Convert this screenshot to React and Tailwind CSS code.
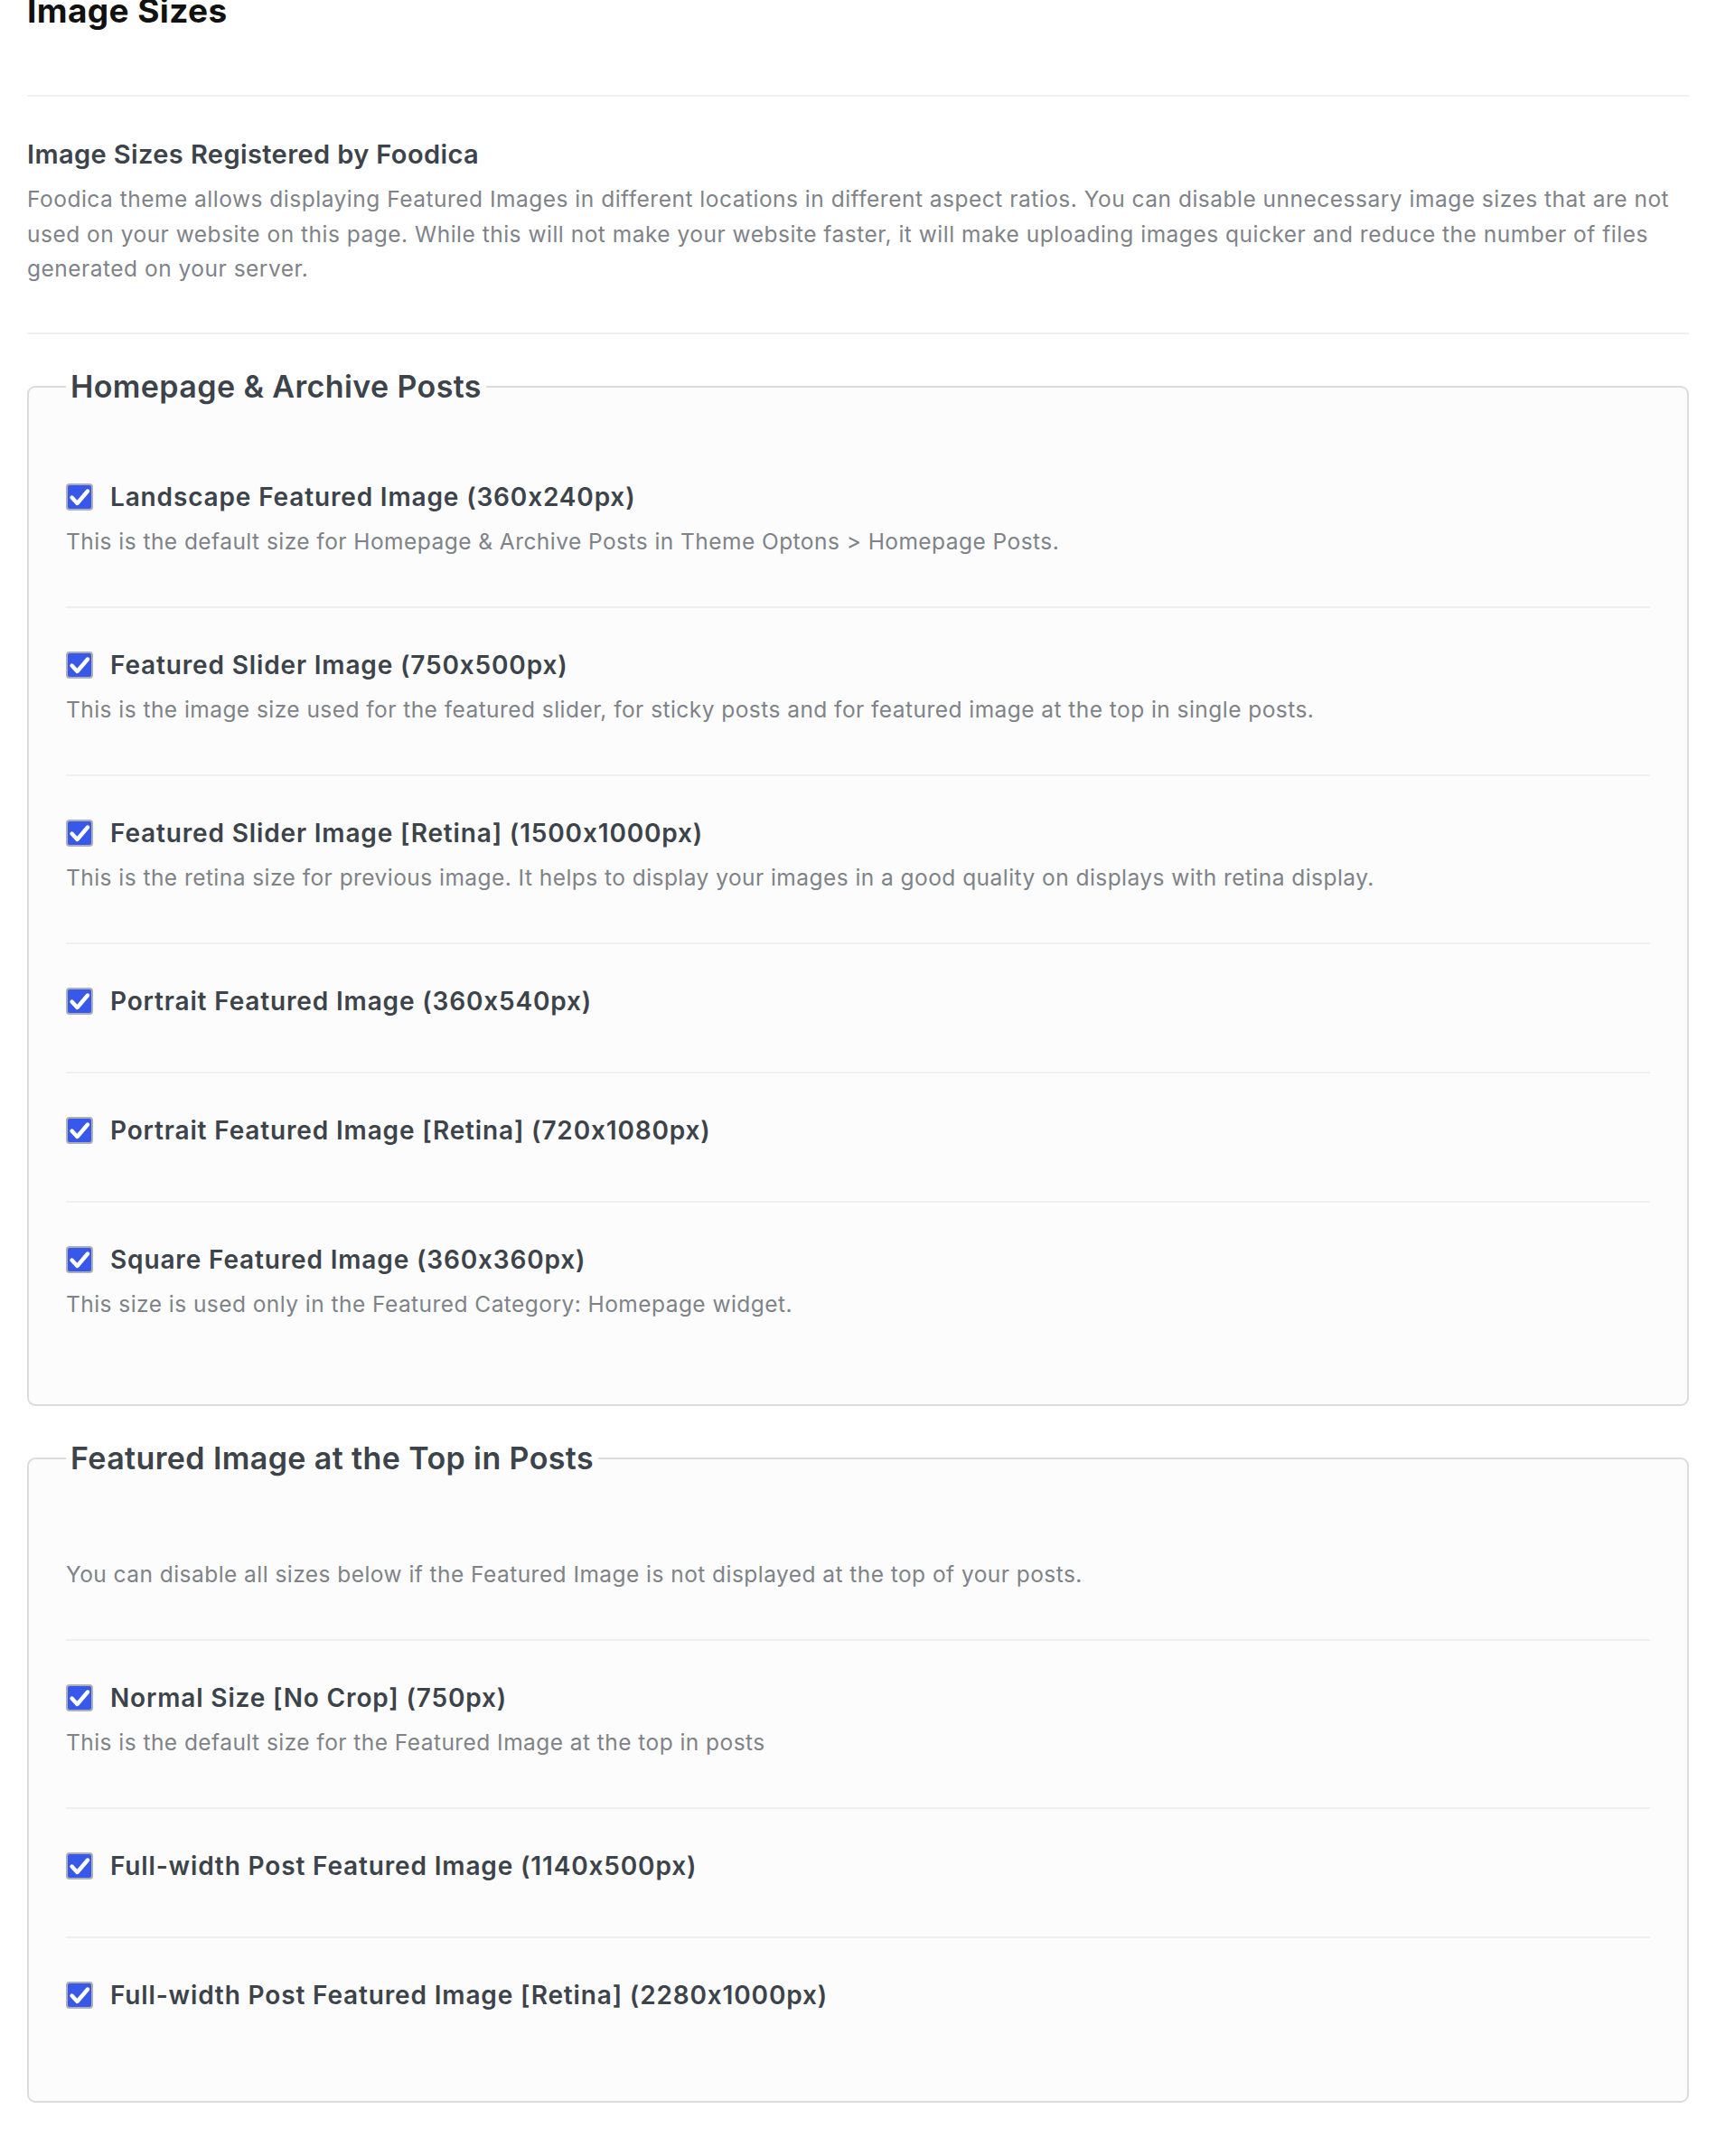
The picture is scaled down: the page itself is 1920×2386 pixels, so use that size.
import React from "react";

function Check() {
  return (
    <span className="flex h-[30px] w-[30px] shrink-0 items-center justify-center rounded-[4px] border-2 border-[#adb0b5] bg-[#3858e9]">
      <svg width="26" height="26" viewBox="0 0 26 26" fill="none">
        <path d="M4.5 13.5 L10.5 20 L22 6.5" stroke="#ffffff" strokeWidth="4.4" strokeLinecap="round" strokeLinejoin="round" />
      </svg>
    </span>
  );
}

function Item({ label, desc, first }) {
  const pad = desc ? "pb-[53px]" : "pb-[58px]";
  return (
    <div className={(first ? "pt-[44px] " : "border-t-2 border-[#f0f0f1] pt-[43px] ") + pad}>
      <div className="flex items-center gap-[19px]">
        <Check />
        <span className="text-[28px] leading-[40px] font-semibold tracking-[0.85px] text-[#3c434a]">{label}</span>
      </div>
      {desc && <p className="mt-[10px] text-[24.5px] leading-[38px] tracking-[0.45px] text-[#7f8389]">{desc}</p>}
    </div>
  );
}

function Group({ title, children, className }) {
  return (
    <fieldset className={"rounded-[9px] border-2 border-[#dcdcde] bg-[#fcfcfc] px-[41px] pt-[38px] pb-[39px] " + className}>
      <legend className="px-[5px] text-[34px] leading-[40px] font-semibold tracking-[0.4px] text-[#3c434a]">{title}</legend>
      {children}
    </fieldset>
  );
}

export default function App() {
  return (
    <div className="min-h-screen bg-white pl-[30px] pr-[51px] pb-[63px] font-[Inter,sans-serif] [font-feature-settings:'calt'_0]">
      <h1 className="-mt-[10px] text-[37px] leading-[44px] font-bold tracking-[0.4px] text-[#111111]">Image Sizes</h1>
      <div className="mt-[71px] h-[2px] bg-[#f0f0f1]" />
      <h2 className="mt-[46px] text-[29px] leading-[36px] font-semibold tracking-[0.4px] text-[#3c434a]">Image Sizes Registered by Foodica</h2>
      <p className="mt-[12px] text-[24.5px] leading-[38.5px] tracking-[0.5px] text-[#7f8389]">
        Foodica theme allows displaying Featured Images in different locations in different aspect ratios. You can disable unnecessary image sizes that are not used on your website on this page. While this will not make your website faster, it will make uploading images quicker and reduce the number of files generated on your server.
      </p>
      <div className="mt-[51px] h-[2px] bg-[#f0f0f1]" />

      <Group title="Homepage & Archive Posts" className="mt-[38px]">
        <Item first label="Landscape Featured Image (360x240px)" desc="This is the default size for Homepage & Archive Posts in Theme Optons > Homepage Posts." />
        <Item label="Featured Slider Image (750x500px)" desc="This is the image size used for the featured slider, for sticky posts and for featured image at the top in single posts." />
        <Item label="Featured Slider Image [Retina] (1500x1000px)" desc="This is the retina size for previous image. It helps to display your images in a good quality on displays with retina display." />
        <Item label="Portrait Featured Image (360x540px)" />
        <Item label="Portrait Featured Image [Retina] (720x1080px)" />
        <Item label="Square Featured Image (360x360px)" desc="This size is used only in the Featured Category: Homepage widget." />
      </Group>

      <Group title="Featured Image at the Top in Posts" className="mt-[38px]">
        <div className="pt-[51px] pb-[53px]">
          <p className="text-[24.5px] leading-[38px] tracking-[0.45px] text-[#7f8389]">You can disable all sizes below if the Featured Image is not displayed at the top of your posts.</p>
        </div>
        <Item label="Normal Size [No Crop] (750px)" desc="This is the default size for the Featured Image at the top in posts" />
        <Item label="Full-width Post Featured Image (1140x500px)" />
        <Item label="Full-width Post Featured Image [Retina] (2280x1000px)" />
      </Group>
    </div>
  );
}
